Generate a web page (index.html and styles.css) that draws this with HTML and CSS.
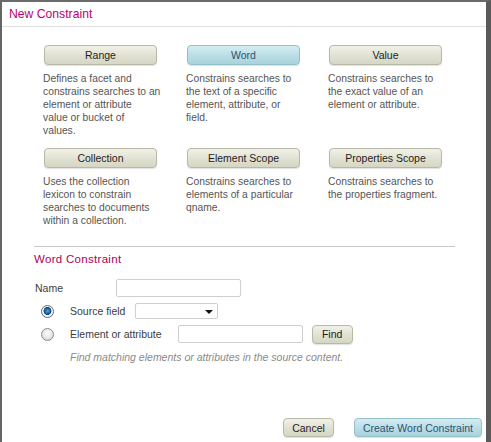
FILE: index.html
```html
<!DOCTYPE html>
<html>
<head>
<meta charset="utf-8">
<link rel="stylesheet" href="styles.css">
</head>
<body>
<div class="dialog">
  <div class="title">New Constraint</div>
  <div class="types">
    <div class="type">
      <button class="btn">Range</button>
      <p class="desc">Defines a facet and<br>constrains searches to an<br>element or attribute<br>value or bucket of<br>values.</p>
    </div>
    <div class="type">
      <button class="btn btn-blue">Word</button>
      <p class="desc">Constrains searches to<br>the text of a specific<br>element, attribute, or<br>field.</p>
    </div>
    <div class="type">
      <button class="btn">Value</button>
      <p class="desc">Constrains searches to<br>the exact value of an<br>element or attribute.</p>
    </div>
    <div class="type">
      <button class="btn">Collection</button>
      <p class="desc">Uses the collection<br>lexicon to constrain<br>searches to documents<br>within a collection.</p>
    </div>
    <div class="type">
      <button class="btn">Element Scope</button>
      <p class="desc">Constrains searches to<br>elements of a particular<br>qname.</p>
    </div>
    <div class="type">
      <button class="btn">Properties Scope</button>
      <p class="desc">Constrains searches to<br>the properties fragment.</p>
    </div>
  </div>
  <div class="section">
    <h2 class="section-title">Word Constraint</h2>
    <div class="row row-name">
      <label class="name-label">Name</label>
      <input class="field field-name" type="text">
    </div>
    <div class="row row-radio">
      <span class="radio radio-on"></span>
      <label class="radio-label">Source field</label>
      <div class="select"><span class="caret"></span></div>
    </div>
    <div class="row row-radio2">
      <span class="radio"></span>
      <label class="radio-label label-elem">Element or attribute</label>
      <input class="field field-elem" type="text">
      <button class="btn btn-find">Find</button>
    </div>
    <p class="hint">Find matching elements or attributes in the source content.</p>
  </div>
  <div class="footer">
    <button class="btn btn-cancel">Cancel</button>
    <button class="btn btn-blue btn-create">Create Word Constraint</button>
  </div>
</div>
</body>
</html>
```
FILE: styles.css
```css
* { box-sizing: border-box; }
html, body { margin: 0; padding: 0; background: #5e5e5e; }
body { font-family: "Liberation Sans", Arial, sans-serif; }

.dialog {
  width: 491px;
  height: 442px;
  background: #fff;
  border-top: 2px solid #6a6a6a;
  border-left: 2px solid #666;
  border-right: 5px solid #5a5a5a;
  display: flex;
  flex-direction: column;
}

.title {
  height: 25px;
  line-height: 24px;
  padding-left: 7px;
  font-size: 12.2px;
  color: #c0006a;
  border-bottom: 1px solid #e0e0e0;
}

.types {
  display: grid;
  grid-template-columns: 143px 142px 143px;
  row-gap: 11px;
  padding: 18px 0 0 41px;
}

.type { display: flex; flex-direction: column; align-items: flex-start; }

.btn {
  font-family: "Liberation Sans", Arial, sans-serif;
  font-size: 10.5px;
  color: #1e1e1e;
  height: 20px;
  padding: 0;
  border: 1px solid #b8b8a6;
  border-radius: 4px;
  background: linear-gradient(#f1f1e8 0%, #e2e2d4 50%, #d6d6c4 100%);
  box-shadow: 0 1px 1px rgba(0,0,0,0.12);
  cursor: pointer;
}
.btn-blue {
  color: #2f5370;
  border-color: #93c0cd;
  background: linear-gradient(#d4ecf1 0%, #bcdfe7 50%, #a9d2dc 100%);
}

.type .btn { width: 113px; margin-left: 1px; }

.desc {
  margin: 7px 0 0 0;
  font-size: 10.3px;
  line-height: 13px;
  color: #555;
  white-space: nowrap;
}

.section {
  margin: 19px 0 0 32px;
  width: 421px;
  border-top: 1px solid #c8c8c8;
}

.section-title {
  margin: 5px 0 0 0;
  font-size: 11.5px;
  line-height: 14px;
  font-weight: normal;
  letter-spacing: 0.3px;
  color: #b0005c;
}

.row { display: flex; align-items: center; }

.row-name { margin-top: 13px; height: 18px; }
.name-label { width: 82px; padding-left: 1px; font-size: 10.5px; color: #3c3c3c; }

.field {
  height: 18px;
  width: 125px;
  border: 1px solid #cfcfcf;
  border-radius: 2px;
  background: #fff;
  padding: 0 3px;
  margin: 0;
}

.row-radio { margin-top: 6px; height: 16px; }
.row-radio2 { margin-top: 6px; height: 18px; }

.radio {
  width: 13px;
  height: 13px;
  margin-left: 7px;
  border-radius: 50%;
  border: 1px solid #8c8c8c;
  background: radial-gradient(circle at 50% 40%, #ffffff 0%, #e6e6e6 55%, #c8c8c8 100%);
  flex: none;
}
.radio-on {
  background: radial-gradient(circle at 50% 45%, #4aa4e0 0%, #1a6cae 30%, #0d3f72 45%, #ffffff 52%, #dcdcdc 100%);
  border-color: #6a6a6a;
}

.radio-label { margin-left: 16px; margin-right: 10px; font-size: 10.5px; color: #3c3c3c; }
.label-elem { margin-right: 16px; }

.select {
  position: relative;
  width: 83px;
  height: 16px;
  border: 1px solid #cfcfcf;
  border-radius: 2px;
  background: #fff;
}
.caret {
  position: absolute;
  right: 4px;
  top: 6px;
  width: 0;
  height: 0;
  border-left: 4px solid transparent;
  border-right: 4px solid transparent;
  border-top: 4px solid #111;
}

.btn-find { width: 41px; height: 19px; margin-left: 9px; }

.hint {
  margin: 8px 0 0 36px;
  font-size: 10.5px;
  line-height: 13px;
  font-style: italic;
  color: #8a8a8a;
}

.footer {
  margin-top: auto;
  display: flex;
  justify-content: flex-end;
  gap: 20px;
  padding: 0 4px 5px 0;
}
.btn-cancel { width: 51px; height: 19px; }
.btn-create { width: 128px; height: 19px; }
```
